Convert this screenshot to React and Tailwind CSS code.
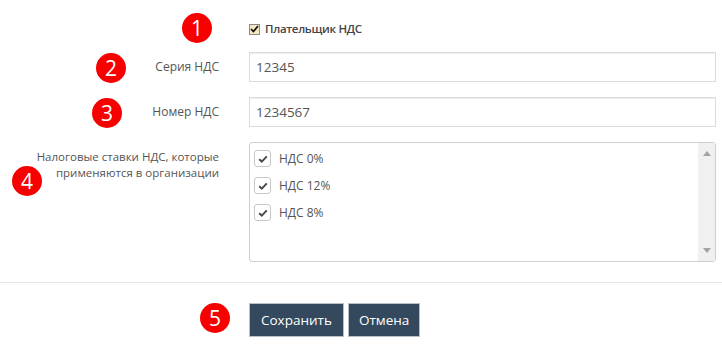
import React from "react";

const Badge = ({ n, className }) => (
  <div
    className={
      "absolute w-[30px] h-[30px] rounded-full bg-[#f60000] text-white flex items-center justify-center text-[21px] leading-none " +
      className
    }
    style={{ fontFamily: "'Open Sans', 'DejaVu Sans', sans-serif" }}
  >
    {n}
  </div>
);

const Check = () => (
  <span className="w-[17px] h-[17px] rounded-[3px] border border-[#c8c8c8] bg-white flex items-center justify-center">
    <svg width="10" height="8" viewBox="0 0 10 8">
      <path d="M1.2 4.2 L3.8 6.6 L8.8 1.4" fill="none" stroke="#4a4a4a" strokeWidth="2" />
    </svg>
  </span>
);

export default function App() {
  return (
    <div
      className="relative w-[722px] h-[347px] bg-white overflow-hidden text-[#555]"
      style={{ fontFamily: "'Open Sans', 'Liberation Sans', sans-serif" }}
    >
      <Badge n="1" className="left-[182px] top-[13px]" />
      <Badge n="2" className="left-[96px] top-[53px]" />
      <Badge n="3" className="left-[92px] top-[98px]" />
      <Badge n="4" className="left-[12px] top-[166px]" />
      <Badge n="5" className="left-[200px] top-[303px]" />

      <div className="pt-[17px] pr-[6px] flex flex-col">
        {/* Row 1 */}
        <div className="flex h-[24px] items-center">
          <div className="w-[249px]" />
          <div className="flex items-center gap-[5px]">
            <span className="w-[11px] h-[11px] border border-[#8a8a8a] bg-[#f3e7c4] flex items-center justify-center">
              <svg width="9" height="8" viewBox="0 0 9 8">
                <path d="M1 4 L3.4 6.5 L8 1" fill="none" stroke="#111" strokeWidth="1.8" />
              </svg>
            </span>
            <span className="text-[11.5px] font-semibold tracking-[-0.3px] text-[#444]">Плательщик НДС</span>
          </div>
        </div>

        {/* Row 2 */}
        <div className="flex items-center mt-[11px]">
          <div className="w-[219px] text-right text-[12px] text-[#555]">Серия НДС</div>
          <div className="ml-[30px] flex-1 h-[30px] border border-[#dcdcdc] shadow-[inset_0_1px_1px_rgba(0,0,0,0.075)] flex items-center px-[6px] text-[13.5px] text-[#555]">
            12345
          </div>
        </div>

        {/* Row 3 */}
        <div className="flex items-center mt-[15px]">
          <div className="w-[219px] text-right text-[12px] text-[#555]">Номер НДС</div>
          <div className="ml-[30px] flex-1 h-[30px] border border-[#dcdcdc] shadow-[inset_0_1px_1px_rgba(0,0,0,0.075)] flex items-center px-[6px] text-[13.5px] text-[#555]">
            1234567
          </div>
        </div>

        {/* Row 4 */}
        <div className="flex mt-[15px]">
          <div className="w-[219px] text-right text-[11.5px] leading-[16px] pt-[7px] text-[#555]">
            Налоговые ставки НДС, которые
            <br />
            применяются в организации
          </div>
          <div className="ml-[30px] flex-1 h-[120px] border border-[#cfcfcf] rounded-[3px] flex overflow-hidden">
            <div className="flex-1 flex flex-col gap-[10px] pt-[7px] pl-[4px]">
              {["НДС 0%", "НДС 12%", "НДС 8%"].map((t) => (
                <div key={t} className="flex items-center gap-[8px] h-[17px]">
                  <Check />
                  <span className="text-[12px] text-[#555]">{t}</span>
                </div>
              ))}
            </div>
            <div className="w-[17px] bg-[#f0f0f0] flex flex-col justify-between items-center py-[8px]">
              <svg width="8" height="5" viewBox="0 0 8 5">
                <path d="M0 5 L4 0 L8 5 Z" fill="#a3a3a3" />
              </svg>
              <svg width="8" height="5" viewBox="0 0 8 5">
                <path d="M0 0 L4 5 L8 0 Z" fill="#a3a3a3" />
              </svg>
            </div>
          </div>
        </div>
      </div>

      <div className="mt-[20px] border-t border-[#e5e5e5]" />

      <div className="flex mt-[20px] pl-[249px] gap-[4px]">
        <button className="h-[34px] px-[11px] bg-[#34495e] border border-[#b8bfc6] text-white text-[13.5px]">
          Сохранить
        </button>
        <button className="h-[34px] px-[10px] bg-[#34495e] border border-[#b8bfc6] text-white text-[13.5px]">
          Отмена
        </button>
      </div>
    </div>
  );
}
